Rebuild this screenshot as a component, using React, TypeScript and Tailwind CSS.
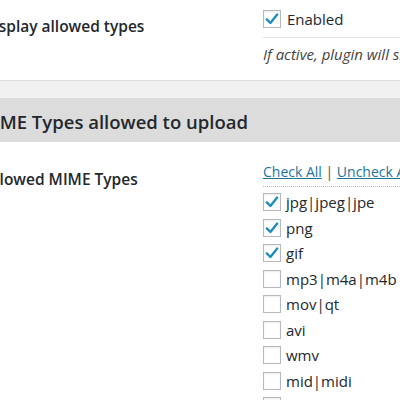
import React from "react";

/* ── Data ──────────────────────────────────────────────────────────────── */

const MIME_TYPES: { label: string; checked: boolean }[] = [
  { label: "jpg|jpeg|jpe", checked: true },
  { label: "png", checked: true },
  { label: "gif", checked: true },
  { label: "mp3|m4a|m4b", checked: false },
  { label: "mov|qt", checked: false },
  { label: "avi", checked: false },
  { label: "wmv", checked: false },
  { label: "mid|midi", checked: false },
  { label: "pdf", checked: false },
];

/* ── Checkbox ──────────────────────────────────────────────────────────── */

function Box({ checked }: { checked: boolean }) {
  return (
    <span className="flex h-[18px] w-[18px] shrink-0 items-center justify-center border border-[#b4b9be] bg-white shadow-[inset_0_1px_2px_rgba(0,0,0,0.08)]">
      {checked && (
        <svg viewBox="0 0 20 20" className="h-[16px] w-[16px]">
          <path d="M3.5 10.5 L8 15 L16.5 4.5" fill="none" stroke="#1e8cbe" strokeWidth="3" strokeLinecap="round" strokeLinejoin="round" />
        </svg>
      )}
    </span>
  );
}

/* ── Page ──────────────────────────────────────────────────────────────── */

export default function App() {
  return (
    <div className="h-[400px] w-[400px] overflow-hidden bg-white text-[#23282d]" style={{ fontFamily: '"Open Sans", "Noto Sans", sans-serif' }}>
      {/* ═══ DISPLAY ALLOWED TYPES ═══ */}
      <div className="flex h-[80px]">
        <div className="w-[263px] shrink-0 pt-[15px]">
          <div className="ml-[-17px] whitespace-nowrap text-[15.5px] font-semibold">Display allowed types</div>
        </div>
        <div className="flex-1 pt-[10px]">
          <div className="flex items-center gap-[6px] border-b border-[#e5e5e5] pb-[9px]">
            <Box checked />
            <span className="text-[15px] leading-[18px]">Enabled</span>
          </div>
          <div className="mt-[5px] whitespace-nowrap text-[15px] italic text-[#444]">
            If active, plugin will show allowed types
          </div>
        </div>
      </div>

      {/* ═══ SECTION HEADER ═══ */}
      <div className="border-t border-[#dcdcdc] bg-[#f1f1f1] h-[18px]" />
      <div className="flex h-[44px] items-center bg-[#dcdcdc] pt-[3px]">
        <div className="ml-[-23px] whitespace-nowrap text-[18.5px] font-semibold">MIME Types allowed to upload</div>
      </div>

      {/* ═══ ALLOWED MIME TYPES ═══ */}
      <div className="flex">
        <div className="w-[263px] shrink-0 pt-[26px]">
          <div className="ml-[-15px] whitespace-nowrap text-[15.5px] font-semibold">Allowed MIME Types</div>
        </div>
        <div className="flex-1 pt-[21px]">
          <div className="whitespace-nowrap border-b border-dotted border-[#bbb] pb-[6px] text-[14px] leading-[17px]">
            <a className="text-[#21759b] underline">Check All</a>
            <span className="text-[#555]"> | </span>
            <a className="text-[#21759b] underline">Uncheck All</a>
          </div>
          <div className="flex flex-col gap-[7.5px] pt-[6px]">
            {MIME_TYPES.map((t) => (
              <label key={t.label} className="flex items-center gap-[5px] whitespace-nowrap">
                <Box checked={t.checked} />
                <span className="text-[15px] leading-[18px]">{t.label}</span>
              </label>
            ))}
          </div>
        </div>
      </div>
    </div>
  );
}
